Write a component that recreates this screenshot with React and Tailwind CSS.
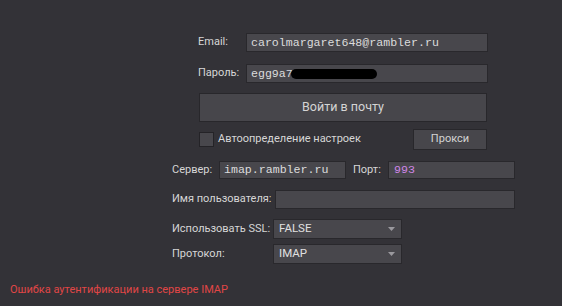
import React from 'react';

const Field = ({ className = '', color = 'text-[#dcdcdc]', children }) => (
    <div
        className={`shrink-0 flex items-center bg-[#48474c] border border-[#29282c] pl-[4px] overflow-hidden whitespace-nowrap font-['Liberation_Mono',monospace] text-[11.6px] ${color} ${className}`}
    >
        {children}
    </div>
);

const Select = ({ value }) => (
    <div className="shrink-0 flex items-center justify-between w-[129px] h-[20px] bg-[#48474c] border border-[#29282c] pl-[5px] pr-[6px] text-[11.5px] text-[#e0e0e0]">
        <span>{value}</span>
        <svg width="7" height="4" viewBox="0 0 7 4">
            <path d="M0 0h7L3.5 4z" fill="#9a999e" />
        </svg>
    </div>
);

export default function App() {
    return (
        <div className="w-[562px] h-[306px] bg-[#333237] flex flex-col font-['Roboto','Liberation_Sans',sans-serif] text-[11px] text-[#d6d6d6] whitespace-nowrap overflow-hidden">
            {/* Account block */}
            <div className="flex flex-col pl-[198px] pt-[33px]">
                <div className="flex items-center">
                    <span className="shrink-0 w-[48px]">Email:</span>
                    <Field className="w-[242px] h-[19px]">carolmargaret648@rambler.ru</Field>
                </div>
                <div className="flex items-center mt-[12px]">
                    <span className="shrink-0 w-[48px]">Пароль:</span>
                    <Field className="w-[242px] h-[19px]">
                        egg9a7
                        <span className="inline-block w-[86px] h-[10px] bg-black rounded-full blur-[0.6px] -ml-[2px]"></span>
                    </Field>
                </div>
                <button className="ml-px mt-[10px] w-[288px] h-[29px] bg-[#47464b] border border-[#28272b] text-[12.5px] text-[#d4d4d4]">
                    Войти в почту
                </button>
                <div className="flex items-center ml-px mt-[7px] w-[288px] h-[21px]">
                    <span className="shrink-0 w-[15px] h-[15px] bg-[#48474c] border border-[#242327]"></span>
                    <span className="ml-[4px]">Автоопределение настроек</span>
                    <button className="ml-auto w-[74px] h-[21px] bg-[#47464b] border border-[#28272b] text-[#d4d4d4]">
                        Прокси
                    </button>
                </div>
            </div>

            {/* Server settings */}
            <div className="flex flex-col pl-[172px] mt-[11px]">
                <div className="flex items-center">
                    <span className="shrink-0 w-[47px]">Сервер:</span>
                    <Field className="w-[127px] h-[18px]">imap.rambler.ru</Field>
                    <span className="shrink-0 ml-[7px] w-[35px]">Порт:</span>
                    <Field className="w-[127px] h-[18px] pl-[5px]" color="text-[#cf86e6]">993</Field>
                </div>
                <div className="flex items-center mt-[11px]">
                    <span className="shrink-0 w-[103px]">Имя пользователя:</span>
                    <Field className="w-[240px] h-[19px]"></Field>
                </div>
                <div className="flex items-center mt-[10px]">
                    <span className="shrink-0 w-[101px]">Использовать SSL:</span>
                    <Select value="FALSE" />
                </div>
                <div className="flex items-center mt-[5px]">
                    <span className="shrink-0 w-[101px]">Протокол:</span>
                    <Select value="IMAP" />
                </div>
            </div>

            <div className="pl-[10px] mt-[18px] text-[#e04646]">
                Ошибка аутентификации на сервере IMAP
            </div>
        </div>
    );
}
